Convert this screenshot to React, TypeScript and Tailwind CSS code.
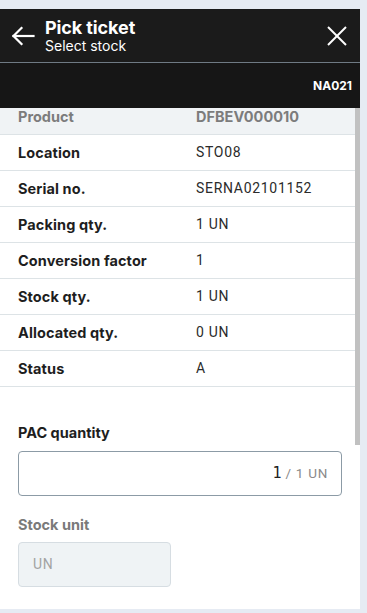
import React from "react";

const rows: { label: string; value: string }[] = [
  { label: "Location", value: "STO08" },
  { label: "Serial no.", value: "SERNA02101152" },
  { label: "Packing qty.", value: "1 UN" },
  { label: "Conversion factor", value: "1" },
  { label: "Stock qty.", value: "1 UN" },
  { label: "Allocated qty.", value: "0 UN" },
  { label: "Status", value: "A" },
];

const labelFont = "font-['Inter',sans-serif]";
const valueFont = "font-['Roboto',sans-serif] tracking-[0.7px]";

export default function App() {
  return (
    <div className="h-[613px] w-[367px] overflow-hidden bg-[#e6ebf3] pt-[9px] pr-[7px]">
      <div className="flex h-[600px] flex-col bg-white">
        {/* header */}
        <div className="flex h-[53px] items-center bg-[#1b1b1b] pl-[11px] pr-[13px] text-white">
          <svg width="24" height="20" viewBox="0 0 24 20" fill="none" stroke="white" strokeWidth="2.2" strokeLinecap="square">
            <path d="M22.5 10H2.5" />
            <path d="M10.5 2L2.5 10L10.5 18" />
          </svg>
          <div className={`ml-[10px] flex flex-col ${labelFont}`}>
            <span className="text-[18px] leading-[20px] font-bold tracking-[-0.1px]">Pick ticket</span>
            <span className="text-[14px] leading-[16px]">Select stock</span>
          </div>
          <svg className="ml-auto" width="20" height="20" viewBox="0 0 20 20" fill="none" stroke="white" strokeWidth="2">
            <path d="M1 1L19 19" />
            <path d="M19 1L1 19" />
          </svg>
        </div>
        <div className="h-px bg-[#6f7a84]" />
        <div className={`flex h-[45px] items-center justify-end bg-[#161616] pr-[8px] text-[12px] font-bold text-white ${labelFont}`}>
          NA021
        </div>

        {/* body */}
        <div className="flex min-h-0 flex-1 overflow-hidden">
          <div className="min-w-0 flex-1 overflow-hidden">
            <div className="-mt-[9px] grid h-[36px] grid-cols-[178px_1fr] items-center border-b border-[#dde3e6] bg-[#f0f3f5] px-[18px]">
              <span className={`text-[14.5px] font-bold text-[#7c7c7c] ${labelFont}`}>Product</span>
              <span className={`text-[14.5px] font-bold text-[#7c7c7c] ${labelFont}`}>DFBEV000010</span>
            </div>
            {rows.map((r) => (
              <div
                key={r.label}
                className="grid h-[36px] grid-cols-[178px_1fr] items-center border-b border-[#dde3e6] px-[18px]"
              >
                <span className={`text-[14.5px] font-bold tracking-[0.1px] text-[#1e1e1e] ${labelFont}`}>{r.label}</span>
                <span className={`text-[14px] text-[#2b2b2b] ${valueFont}`}>{r.value}</span>
              </div>
            ))}

            <div className="pl-[18px] pr-[13px] pt-[36px]">
              <div className={`mb-[8px] text-[14.5px] leading-[20px] font-bold text-[#1e1e1e] ${labelFont}`}>PAC quantity</div>
              <div className="flex h-[45px] items-center justify-end rounded-[4px] border border-[#8c9ba6] pr-[13px]">
                <span className="font-['DejaVu_Sans_Mono',monospace] text-[15px] text-[#222]">1</span>
                <span className={`ml-[4px] text-[13.5px] text-[#8a8a8a] ${valueFont}`}>/ 1 UN</span>
              </div>

              <div className={`mt-[19px] mb-[7px] text-[14.5px] leading-[20px] font-bold text-[#7a7a7a] ${labelFont}`}>Stock unit</div>
              <div className="flex h-[45px] w-[153px] items-center rounded-[4px] border border-[#d6dde2] bg-[#eff3f5] pl-[14px]">
                <span className={`text-[14px] text-[#a3a3a3] ${valueFont}`}>UN</span>
              </div>
            </div>
          </div>
          {/* scrollbar */}
          <div className="w-[5px] shrink-0 bg-white">
            <div className="h-[337px] bg-[#c1c1c1]" />
          </div>
        </div>
      </div>
    </div>
  );
}
